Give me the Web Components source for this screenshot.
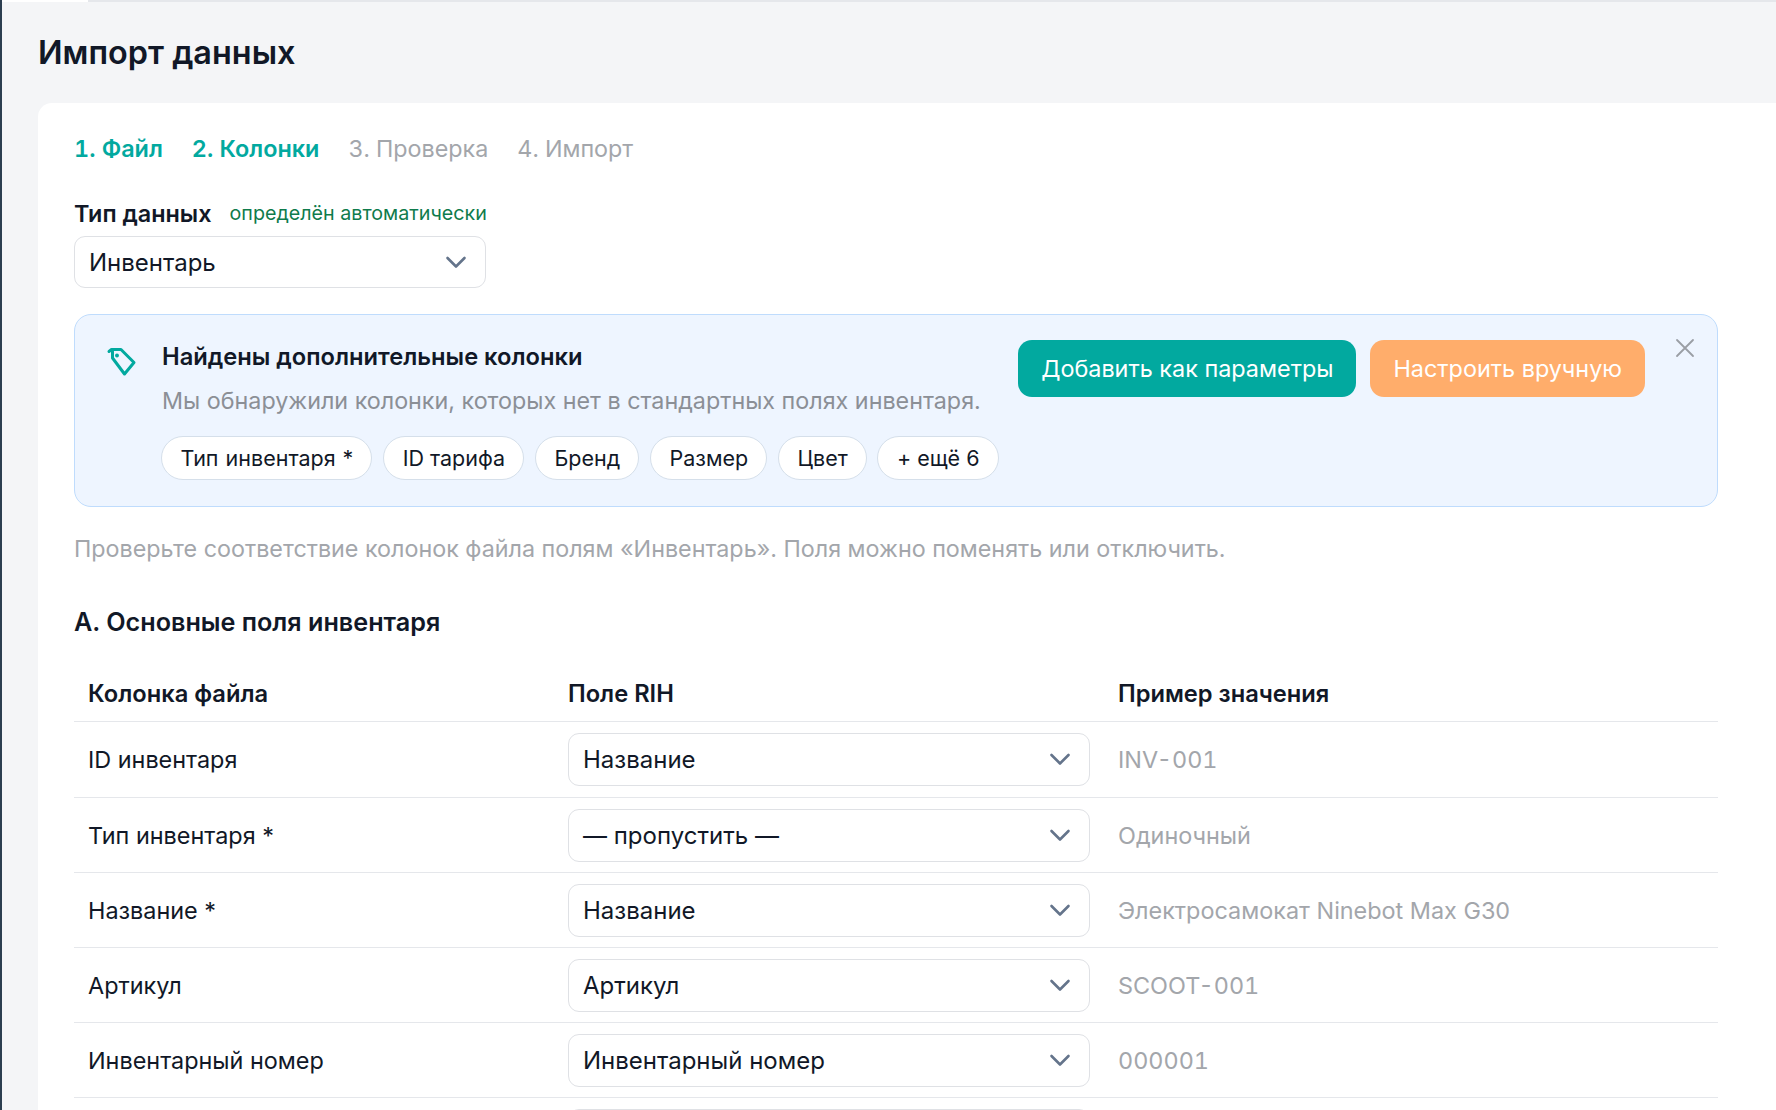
<!DOCTYPE html>
<html lang="ru">
<head>
<meta charset="utf-8">
<title>Импорт данных</title>
<style>
    html, body { margin: 0; height: 100%; overflow: hidden; }
    body { font-family: Inter, "Noto Sans", sans-serif; color: #111827; background: #f4f5f7; }
</style>
</head>
<body>
<import-page heading="Импорт данных">
    <step-tabs done="2">
        <span>1. Файл</span><span>2. Колонки</span><span>3. Проверка</span><span>4. Импорт</span>
    </step-tabs>
    <type-field label="Тип данных" hint="определён автоматически" value="Инвентарь"></type-field>
    <found-banner heading="Найдены дополнительные колонки" text="Мы обнаружили колонки, которых нет в стандартных полях инвентаря.">
        <tag-chip style="word-spacing: 1px">Тип инвентаря *</tag-chip>
        <tag-chip>ID тарифа</tag-chip>
        <tag-chip>Бренд</tag-chip>
        <tag-chip>Размер</tag-chip>
        <tag-chip>Цвет</tag-chip>
        <tag-chip>+ ещё 6</tag-chip>
        <action-button slot="actions" color="#02a99f">Добавить как параметры</action-button>
        <action-button slot="actions" color="#ffad6b">Настроить вручную</action-button>
    </found-banner>
    <page-note>Проверьте соответствие колонок файла полям «Инвентарь». Поля можно поменять или отключить.</page-note>
    <section-title>A. Основные поля инвентаря</section-title>
    <mapping-table>
        <mapping-row header file="Колонка файла" field="Поле RIH" sample="Пример значения"></mapping-row>
        <mapping-row first code file="ID инвентаря" field="Название" sample="INV-001"></mapping-row>
        <mapping-row file="Тип инвентаря *" field="— пропустить —" sample="Одиночный"></mapping-row>
        <mapping-row file="Название *" field="Название" sample="Электросамокат Ninebot Max G30"></mapping-row>
        <mapping-row code file="Артикул" field="Артикул" sample="SCOOT-001"></mapping-row>
        <mapping-row code file="Инвентарный номер" field="Инвентарный номер" sample="000001"></mapping-row>
        <mapping-row></mapping-row>
    </mapping-table>
</import-page>

<script>
const chevron = `<svg width="24" height="24" viewBox="0 0 24 24" fill="none" stroke="#64748b" stroke-width="2.6" stroke-linecap="round" stroke-linejoin="round"><path d="M3.5 8 12 16.5 20.5 8"/></svg>`;

class ImportPage extends HTMLElement {
    constructor() {
        super();
        this.root = this.attachShadow({ mode: 'open' });
        this.root.innerHTML = `
            <style>
                :host { display: block; height: 100vh; box-sizing: border-box; border-left: 2px solid #2c3e50; overflow: hidden; }
                .topline { height: 2px; display: flex; }
                .topline i { display: block; width: 86px; background: #fff; }
                .topline b { display: block; flex: 1; background: #e5e7eb; }
                h1 { margin: 0; padding: 31px 0 0 36px; height: 70px; box-sizing: border-box; font-size: 32.4px; line-height: 40px; font-weight: 600; color: #111827; }
                .card { margin: 31px 0 0 36px; padding: 28px 58px 0 36px; min-height: 1100px; background: #fff; border-radius: 14px 0 0 0; }
            </style>
            <div class="topline"><i></i><b></b></div>
            <h1>${this.getAttribute('heading')}</h1>
            <div class="card"><slot></slot></div>
        `;
    }
}
customElements.define('import-page', ImportPage);

class StepTabs extends HTMLElement {
    constructor() {
        super();
        this.root = this.attachShadow({ mode: 'open' });
        this.root.innerHTML = `
            <style>
                :host { display: flex; gap: 29px; box-sizing: border-box; height: 36px; padding-top: 3px; line-height: 30px; align-items: baseline; font-size: 23.3px; font-variant-numeric: tabular-nums; color: #a3a6ab; }
                ::slotted(.on) { color: #02a99f; font-weight: 600; font-size: 23.4px; }
            </style>
            <slot></slot>
        `;
        const done = Number(this.getAttribute('done'));
        [...this.children].forEach((tab, i) => { if (i < done) tab.className = 'on'; });
    }
}
customElements.define('step-tabs', StepTabs);

class FieldSelect extends HTMLElement {
    constructor() {
        super();
        this.root = this.attachShadow({ mode: 'open' });
        this.root.innerHTML = `
            <style>
                :host { display: flex; align-items: center; justify-content: space-between; box-sizing: border-box; height: 53px; padding: 0 17px 0 14px; background: #fff; border: 1px solid #dfe1e5; border-radius: 11px; font-size: 24px; color: #111827; }
                svg { display: block; }
            </style>
            <span>${this.getAttribute('value') || ''}</span>
            ${chevron}
        `;
    }
}
customElements.define('field-select', FieldSelect);

class TypeField extends HTMLElement {
    constructor() {
        super();
        this.root = this.attachShadow({ mode: 'open' });
        this.root.innerHTML = `
            <style>
                :host { display: block; margin-top: 28px; width: 412px; }
                .head { display: flex; align-items: center; gap: 18px; height: 36px; margin-bottom: 5px; white-space: nowrap; }
                b { font-size: 23.4px; font-weight: 600; color: #111827; }
                span { font-size: 19.7px; color: #0f7b4c; }
                field-select { height: 52px; }
            </style>
            <div class="head"><b>${this.getAttribute('label')}</b><span>${this.getAttribute('hint')}</span></div>
            <field-select value="${this.getAttribute('value')}"></field-select>
        `;
    }
}
customElements.define('type-field', TypeField);

class TagChip extends HTMLElement {
    constructor() {
        super();
        this.root = this.attachShadow({ mode: 'open' });
        this.root.innerHTML = `
            <style>
                :host { display: flex; align-items: center; box-sizing: border-box; height: 44px; padding: 0 18px 0 18.5px; background: #fff; border: 1px solid #d5dfea; border-radius: 22px; font-size: 21.5px; color: #111827; white-space: nowrap; }
            </style>
            <slot></slot>
        `;
    }
}
customElements.define('tag-chip', TagChip);

class ActionButton extends HTMLElement {
    constructor() {
        super();
        this.root = this.attachShadow({ mode: 'open' });
        this.root.innerHTML = `
            <style>
                :host { display: flex; align-items: center; box-sizing: border-box; height: 57px; padding: 0 23px; background: ${this.getAttribute('color')}; border-radius: 14px; font-size: 23.4px; color: #fff; white-space: nowrap; }
            </style>
            <slot></slot>
        `;
    }
}
customElements.define('action-button', ActionButton);

class FoundBanner extends HTMLElement {
    constructor() {
        super();
        this.root = this.attachShadow({ mode: 'open' });
        this.root.innerHTML = `
            <style>
                :host { display: flex; box-sizing: border-box; height: 193px; margin-top: 26px; padding: 25px 22px 0 31px; background: #eef5ff; border: 1px solid #bfdcfd; border-radius: 17px; position: relative; }
                .icon { flex: none; width: 32px; height: 32px; margin-top: 6px; margin-right: 24px; }
                .body { flex: 1; min-width: 0; padding-top: 1px; }
                h3 { margin: 0; font-size: 23.7px; line-height: 32px; font-weight: 600; color: #111827; }
                p { margin: 12px 0 0; font-size: 23.3px; line-height: 32px; color: #8b8f96; white-space: nowrap; }
                .chips { display: flex; gap: 10.8px; margin: 19px 0 0 -1px; }
                .actions { flex: none; display: flex; gap: 14px; align-self: flex-start; margin-right: 50px; }
                .close { position: absolute; top: 23px; right: 22px; width: 20px; height: 20px; }
            </style>
            <svg class="icon" viewBox="0 0 32 32" fill="none" stroke="#02a99f" stroke-width="3" stroke-linejoin="round" stroke-linecap="round">
                <path d="M3 5.5 5.5 3.5H15L28 16.5 18.5 28 6.5 12V5.5"/>
                <circle cx="11" cy="9.5" r="1.2" fill="#02a99f" stroke-width="1.5"/>
            </svg>
            <div class="body">
                <h3>${this.getAttribute('heading')}</h3>
                <p>${this.getAttribute('text')}</p>
                <div class="chips"><slot></slot></div>
            </div>
            <div class="actions"><slot name="actions"></slot></div>
            <svg class="close" viewBox="0 0 20 20" fill="none" stroke="#9a9ea5" stroke-width="1.8" stroke-linecap="round"><path d="M2 2 18 18M18 2 2 18"/></svg>
        `;
    }
}
customElements.define('found-banner', FoundBanner);

class PageNote extends HTMLElement {
    constructor() {
        super();
        this.root = this.attachShadow({ mode: 'open' });
        this.root.innerHTML = `
            <style>
                :host { display: block; margin-top: 25px; font-size: 23.3px; line-height: 34px; color: #a3a6ab; white-space: nowrap; }
            </style>
            <slot></slot>
        `;
    }
}
customElements.define('page-note', PageNote);

class SectionTitle extends HTMLElement {
    constructor() {
        super();
        this.root = this.attachShadow({ mode: 'open' });
        this.root.innerHTML = `
            <style>
                :host { display: block; margin-top: 39px; font-size: 25.2px; line-height: 34px; font-weight: 600; color: #111827; }
            </style>
            <slot></slot>
        `;
    }
}
customElements.define('section-title', SectionTitle);

class MappingTable extends HTMLElement {
    constructor() {
        super();
        this.root = this.attachShadow({ mode: 'open' });
        this.root.innerHTML = `
            <style>
                :host { display: block; margin-top: 25px; }
            </style>
            <slot></slot>
        `;
    }
}
customElements.define('mapping-table', MappingTable);

class MappingRow extends HTMLElement {
    constructor() {
        super();
        this.root = this.attachShadow({ mode: 'open' });
        const isHeader = this.hasAttribute('header');
        const file = this.getAttribute('file') || '';
        const field = this.getAttribute('field') || '';
        const sample = this.getAttribute('sample') || '';
        this.root.innerHTML = `
            <style>
                :host { display: grid; grid-template-columns: 480px 550px 1fr; align-items: center; box-sizing: border-box; height: 75px; border-bottom: 1px solid #e5e7eb; font-size: 23.4px; color: #111827; white-space: nowrap; }
                :host([header]) { height: 58px; font-size: 23.7px; font-weight: 600; padding-top: 2px; }
                :host([first]) { height: 76px; padding-bottom: 1px; }
                .cell { padding: 0 14px; }
                .sample { color: #a3a6ab; }
                :host([header]) .sample { color: #111827; }
                :host([code]) .sample { font-variant-numeric: tabular-nums; }
            </style>
            <div class="cell">${file}</div>
            <div class="cell">${isHeader ? field : `<field-select value="${field}"></field-select>`}</div>
            <div class="cell sample">${sample}</div>
        `;
    }
}
customElements.define('mapping-row', MappingRow);
</script>
</body>
</html>
